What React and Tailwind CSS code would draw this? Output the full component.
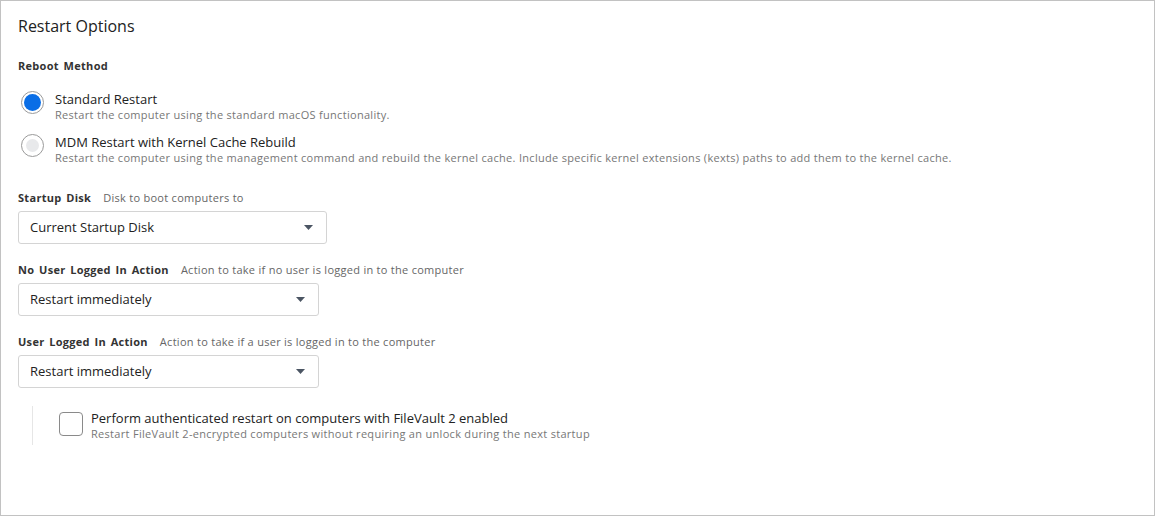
import React, { useState } from 'react';

const FieldLabel = ({ title, hint }) => (
  <div className="flex items-baseline text-[11px] leading-[14px]">
    <span className="font-bold text-[#333] tracking-[0.3px] [word-spacing:1.5px]">{title}</span>
    {hint && <span className="ml-[12px] text-[#666] tracking-[0.28px]">{hint}</span>}
  </div>
);

const Select = ({ value, width }) => (
  <div
    className={`mt-[6px] h-[33px] ${width} flex items-center justify-between rounded-[3px] border border-[#d4d4d4] bg-white pl-[11px] pr-[13px]`}
  >
    <span className="text-[13px] text-[#222]">{value}</span>
    <svg width="9" height="5" viewBox="0 0 9 5">
      <path d="M0 0h9L4.5 5z" fill="#4b5563" />
    </svg>
  </div>
);

const Radio = ({ checked, label, desc, onClick }) => (
  <div className="flex items-start cursor-pointer" onClick={onClick}>
    <div className="mt-0 ml-[3px] w-[23px] h-[23px] rounded-full border border-[#9a9a9a] bg-white flex items-center justify-center shrink-0">
      {checked ? (
        <div className="w-[17px] h-[17px] rounded-full bg-[#0a6ee6]" />
      ) : (
        <div className="w-[13px] h-[13px] rounded-full bg-[#e8e9eb]" />
      )}
    </div>
    <div className="ml-[11px]">
      <div className="text-[13px] leading-[16px] text-[#222]">{label}</div>
      <div className="text-[11px] leading-[15px] text-[#777] tracking-[0.3px]">{desc}</div>
    </div>
  </div>
);

export default function App() {
  const [method, setMethod] = useState('standard');
  const [fileVault, setFileVault] = useState(false);

  return (
    <div
      className="w-[1155px] h-[516px] bg-white border border-[#c2c2c2] px-[17px] pt-[15px]"
      style={{ fontFamily: '"Open Sans", Arial, sans-serif' }}
    >
      <h1 className="text-[16px] leading-[20px] text-[#222]">Restart Options</h1>

      <div className="mt-[23px]">
        <FieldLabel title="Reboot Method" />
        <div className="mt-[18px] flex flex-col gap-[12px]">
          <Radio
            checked={method === 'standard'}
            onClick={() => setMethod('standard')}
            label="Standard Restart"
            desc="Restart the computer using the standard macOS functionality."
          />
          <Radio
            checked={method === 'mdm'}
            onClick={() => setMethod('mdm')}
            label="MDM Restart with Kernel Cache Rebuild"
            desc="Restart the computer using the management command and rebuild the kernel cache. Include specific kernel extensions (kexts) paths to add them to the kernel cache."
          />
        </div>
      </div>

      <div className="mt-[26px]">
        <FieldLabel title="Startup Disk" hint="Disk to boot computers to" />
        <Select value="Current Startup Disk" width="w-[309px]" />
      </div>

      <div className="mt-[19px]">
        <FieldLabel title="No User Logged In Action" hint="Action to take if no user is logged in to the computer" />
        <Select value="Restart immediately" width="w-[301px]" />
      </div>

      <div className="mt-[19px]">
        <FieldLabel title="User Logged In Action" hint="Action to take if a user is logged in to the computer" />
        <Select value="Restart immediately" width="w-[301px]" />
      </div>

      <div className="mt-[18px] ml-[14px] border-l border-[#e6e6e6] pl-[26px] flex items-start py-[4px]">
        <button
          onClick={() => setFileVault(!fileVault)}
          className="mt-[2px] w-[24px] h-[24px] rounded-[4px] border border-[#8a8a8a] bg-white shrink-0"
        />
        <div className="ml-[8px]">
          <div className="text-[13px] leading-[16px] text-[#222]">
            Perform authenticated restart on computers with FileVault 2 enabled
          </div>
          <div className="text-[11px] leading-[15px] text-[#777] tracking-[0.3px]">
            Restart FileVault 2-encrypted computers without requiring an unlock during the next startup
          </div>
        </div>
      </div>
    </div>
  );
}
